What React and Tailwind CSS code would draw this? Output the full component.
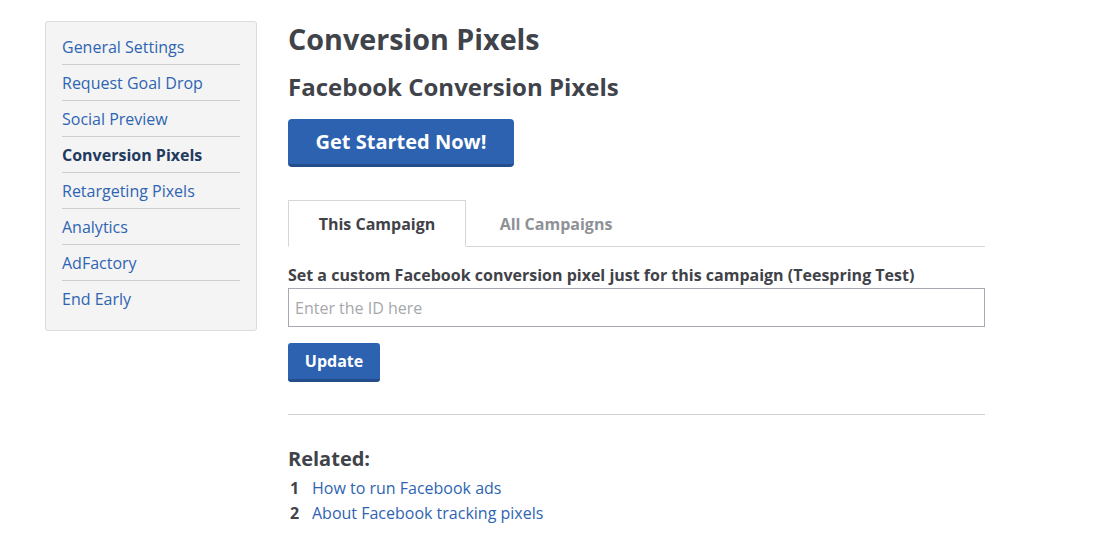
import { useState } from 'react'

const navItems = [
  'General Settings',
  'Request Goal Drop',
  'Social Preview',
  'Conversion Pixels',
  'Retargeting Pixels',
  'Analytics',
  'AdFactory',
  'End Early',
]

function App() {
  const [active, setActive] = useState('Conversion Pixels')
  const [tab, setTab] = useState('this')

  return (
    <div className="min-h-[557px] bg-white font-['Open_Sans',sans-serif] text-[#3f4248]">
      <div className="flex items-start gap-[31px] pl-[45px] pt-[21px]">
        {/* Sidebar */}
        <div className="w-[212px] rounded-[3px] border border-[#dcdcdc] bg-[#f4f4f4] px-4 pt-[7px] pb-[13px]">
          {navItems.map((item, i) => (
            <div
              key={item}
              className={`flex h-[36px] items-center ${i < navItems.length - 1 ? 'border-b border-[#cfcfcf]' : ''}`}
            >
              <button
                onClick={() => setActive(item)}
                className={`text-[16px] leading-none ${
                  active === item ? 'font-bold text-[#1f3a5f]' : 'text-[#2f64b3]'
                }`}
              >
                {item}
              </button>
            </div>
          ))}
        </div>

        {/* Main */}
        <div className="w-[697px]">
          <h1 className="text-[28.7px] font-bold leading-[36px] text-[#404349]">Conversion Pixels</h1>
          <h2 className="mt-[14px] text-[24px] font-bold leading-[32px] text-[#404349]">Facebook Conversion Pixels</h2>
          <button className="mt-[16px] h-[48px] w-[226px] rounded-[4px] border-b-[3px] border-[#234d8b] bg-[#2c62b0] text-[20px] font-bold text-white">
            Get Started Now!
          </button>

          <div className="mt-[33px] flex border-b border-[#d6d6d6]">
            <button
              onClick={() => setTab('this')}
              className={`-mb-px h-[47px] w-[178px] text-[16px] font-bold ${
                tab === 'this'
                  ? 'border border-b-white border-[#d6d6d6] bg-white text-[#3f4248]'
                  : 'text-[#8e9196]'
              }`}
            >
              This Campaign
            </button>
            <button
              onClick={() => setTab('all')}
              className={`-mb-px h-[47px] w-[180px] text-[16px] font-bold ${
                tab === 'all'
                  ? 'border border-b-white border-[#d6d6d6] bg-white text-[#3f4248]'
                  : 'text-[#8e9196]'
              }`}
            >
              All Campaigns
            </button>
          </div>

          <label className="mt-[17px] block text-[16px] font-bold leading-[22px] text-[#3f4248]">
            Set a custom Facebook conversion pixel just for this campaign (Teespring Test)
          </label>
          <input
            placeholder="Enter the ID here"
            className="mt-[2px] h-[39px] w-full border border-[#a9a9b3] px-[6px] text-[16px] placeholder:text-[#a6a8ad] outline-none"
          />
          <button className="mt-[16px] h-[39px] w-[92px] rounded-[3px] border-b-[3px] border-[#234d8b] bg-[#2c62b0] text-[16px] font-bold text-white">
            Update
          </button>

          <hr className="mt-[32px] border-t border-[#d3d3d3]" />

          <h3 className="mt-[31px] text-[20px] font-bold leading-[26px] text-[#404349]">Related:</h3>
          <ol className="mt-[4px] text-[16px] leading-[25px]">
            <li className="flex">
              <span className="w-[24px] pl-[2px] font-bold text-[#404349]">1</span>
              <a href="#" className="text-[#2f64b3]">How to run Facebook ads</a>
            </li>
            <li className="flex">
              <span className="w-[24px] pl-[2px] font-bold text-[#404349]">2</span>
              <a href="#" className="text-[#2f64b3]">About Facebook tracking pixels</a>
            </li>
          </ol>
        </div>
      </div>
    </div>
  )
}

export default App
